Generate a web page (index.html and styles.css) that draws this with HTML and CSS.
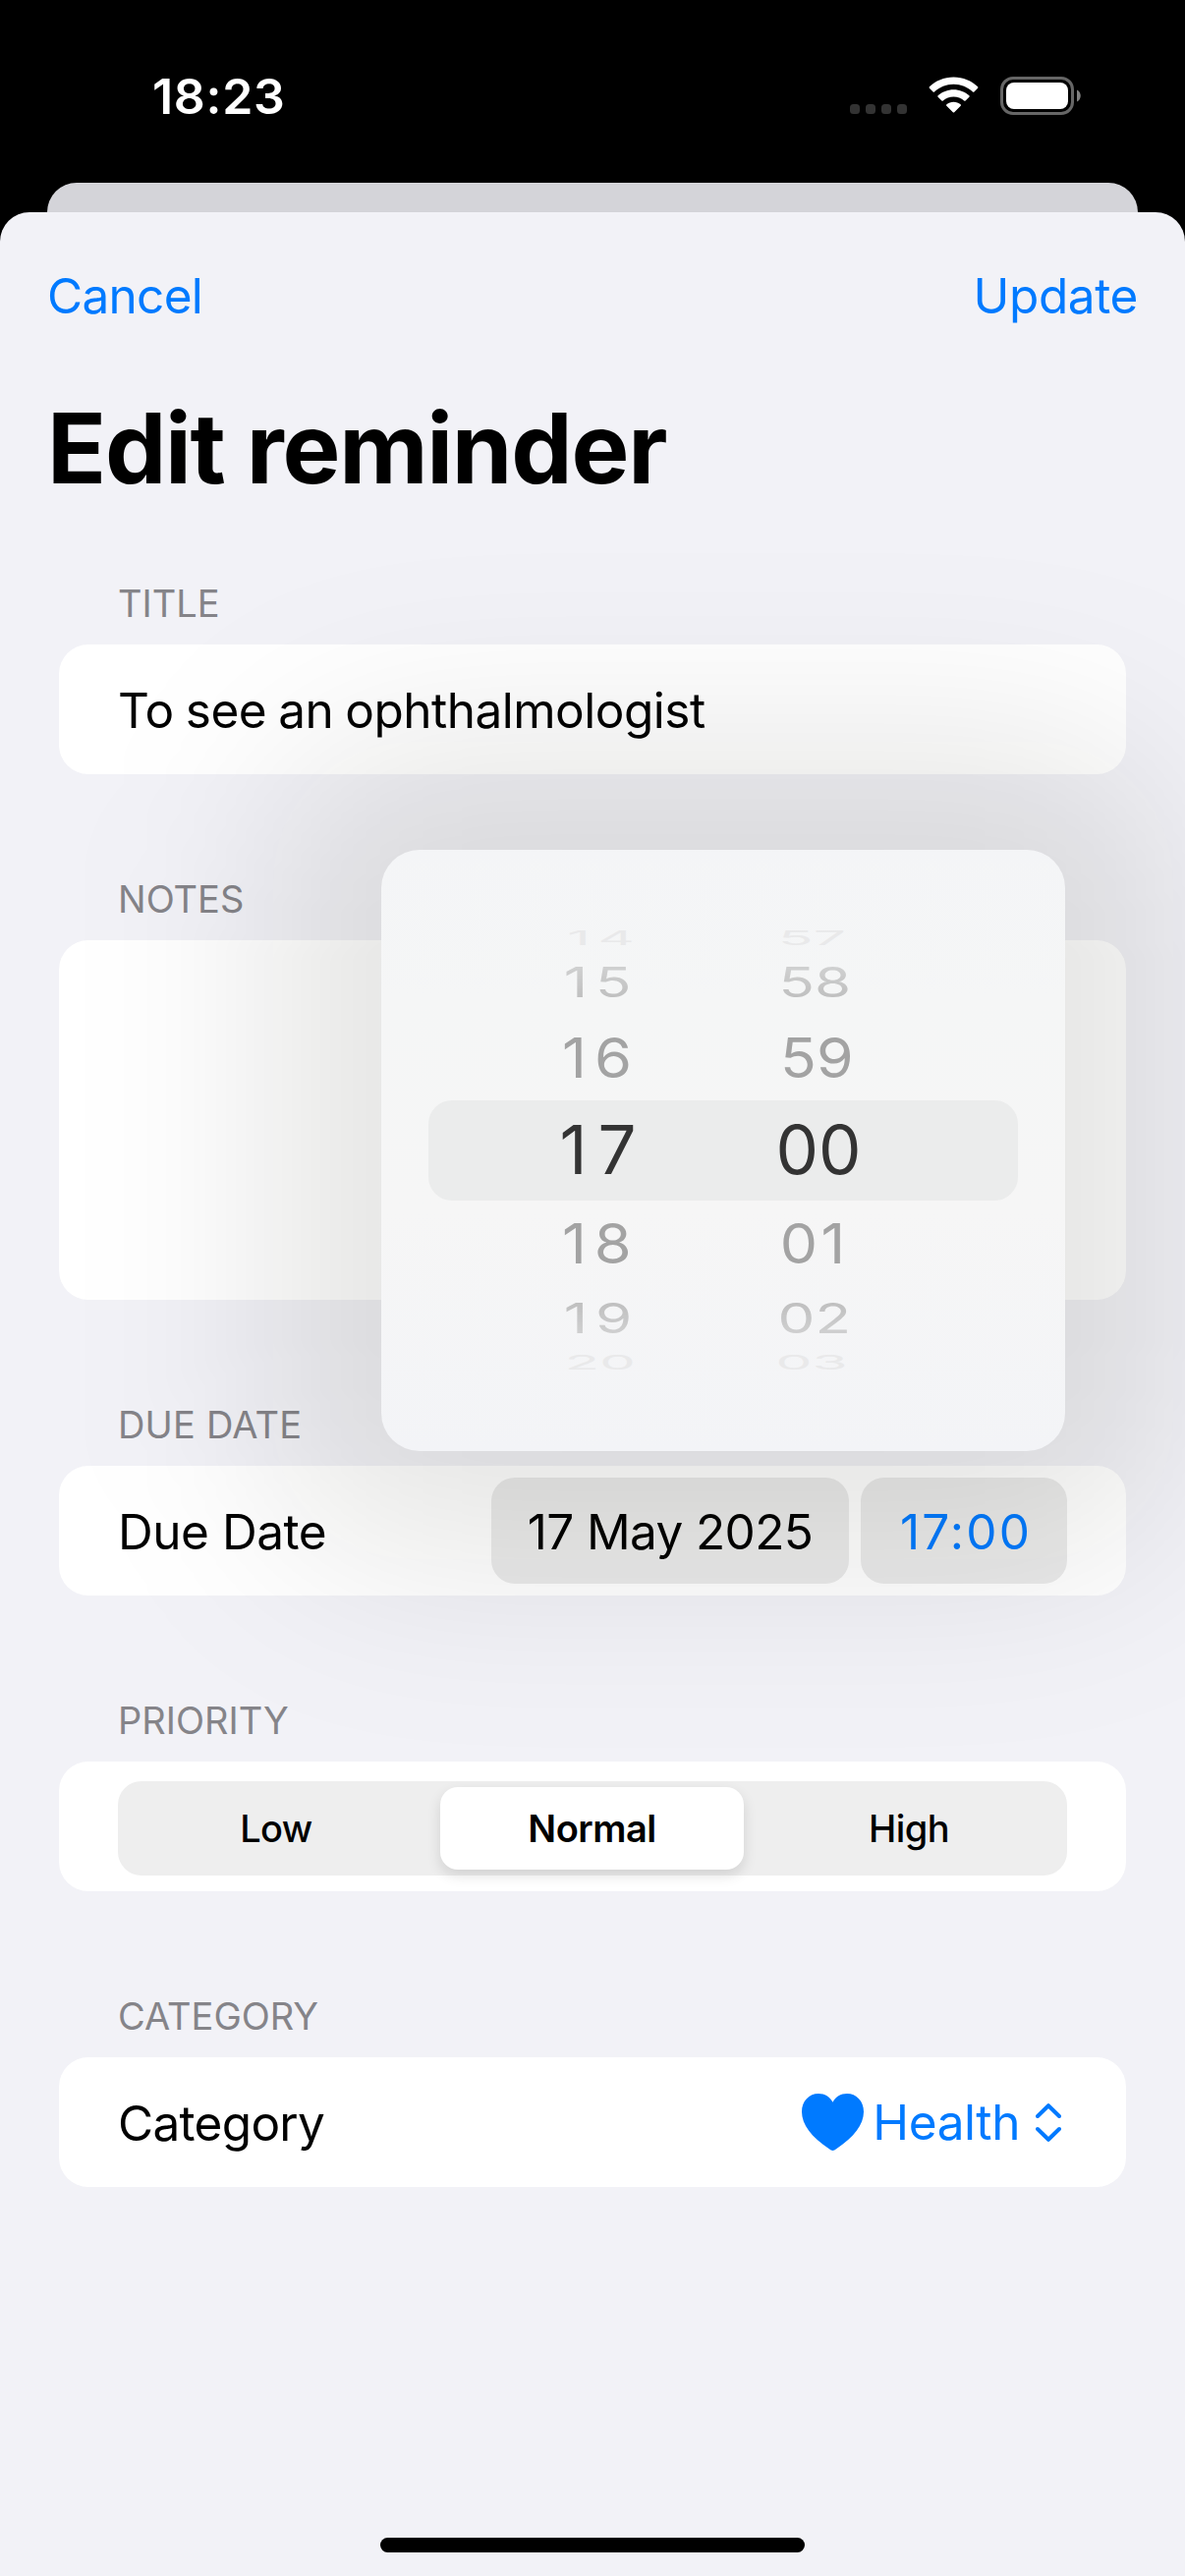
FILE: index.html
```html
<!DOCTYPE html>
<html lang="en">
<head>
<meta charset="utf-8">
<title>Edit reminder</title>
<link rel="stylesheet" href="styles.css">
</head>
<body>
<div class="screen">
  <header class="status">
    <span class="clock">18:23</span>
    <div class="status-icons">
      <svg class="dots" width="58" height="10" viewBox="0 0 58 10"><g fill="#333"><rect width="10" height="10" rx="3.5"/><rect x="16" width="10" height="10" rx="3.5"/><rect x="32" width="10" height="10" rx="3.5"/><rect x="48" width="10" height="10" rx="3.5"/></g></svg>
      <svg class="wifi" width="51" height="38" viewBox="0 0 51 38" fill="#fff"><path d="M25.500 0.500C35.200 0.500 44 4.300 50.100 10.300Q50.800 11 50.100 11.800L46.400 15.400Q45.700 16 45 15.400C39.800 10.600 33 7.700 25.500 7.700S11.200 10.600 6 15.400Q5.300 16 4.600 15.400L0.900 11.800Q0.200 11 0.900 10.300C7 4.300 15.800 0.500 25.500 0.500Z"/><path d="M25.500 13.200C31.600 13.200 37.200 15.500 41.400 19.300Q42.100 20 41.400 20.700L37.600 24.400Q36.900 25 36.200 24.400C33.300 21.900 29.600 20.500 25.500 20.500S17.700 21.900 14.800 24.400Q14.100 25 13.400 24.400L9.600 20.700Q8.900 20 9.600 19.300C13.800 15.500 19.400 13.200 25.500 13.200Z"/><path d="M25.500 25.800C28.200 25.800 30.700 26.700 32.600 28.300Q33.400 29 32.700 29.700L26.200 36.200Q25.500 36.900 24.800 36.200L18.300 29.700Q17.600 29 18.400 28.300C20.300 26.700 22.800 25.800 25.500 25.800Z"/></svg>
      <svg class="battery" width="83" height="39" viewBox="0 0 83 39"><rect x="1.500" y="1.500" width="72" height="36" rx="11.500" fill="none" stroke="#666" stroke-width="3"/><rect x="6" y="6" width="63" height="27" rx="8" fill="#fff"/><path d="M78 13.500C83 15.500 83 23.500 78 25.500Z" fill="#808080"/></svg>
    </div>
  </header>
  <div class="sheet-behind"></div>
  <main class="sheet">
    <nav class="bar"><span class="cancel">Cancel</span><span class="update">Update</span></nav>
    <h1 class="heading">Edit reminder</h1>
    <div class="form">
      <section class="group">
        <h2 class="label">TITLE</h2>
        <div class="card"><span class="text text-title">To see an ophthalmologist</span></div>
      </section>
      <section class="group">
        <h2 class="label">NOTES</h2>
        <div class="card card-notes"></div>
      </section>
      <section class="group">
        <h2 class="label label-due">DUE DATE</h2>
        <div class="card">
          <span class="text text-due">Due Date</span>
          <div class="pills">
            <span class="pill pill-date"><span class="text">17 May 2025</span></span>
            <span class="pill pill-time"><span class="text">17:00</span></span>
          </div>
        </div>
      </section>
      <section class="group">
        <h2 class="label">PRIORITY</h2>
        <div class="card card-segments">
          <div class="segments">
            <span class="segment">Low</span>
            <span class="segment segment-on">Normal</span>
            <span class="segment">High</span>
          </div>
        </div>
      </section>
      <section class="group">
        <h2 class="label">CATEGORY</h2>
        <div class="card">
          <span class="text text-category">Category</span>
          <div class="menu">
            <svg class="heart" width="63" height="58" viewBox="0 0 63 58"><path d="M31.500 58C30.500 58 29 57 27.500 56C10 44.500 0 31.500 0 18.500C0 7.500 7.500 0 17 0C23.500 0 28.500 3.300 31.500 8.700C34.500 3.300 39.500 0 46 0C55.500 0 63 7.500 63 18.500C63 31.500 53 44.500 35.500 56C34 57 32.500 58 31.500 58Z" fill="#007aff"/></svg>
            <span class="health">Health</span>
            <svg class="updown" width="26" height="39" viewBox="0 0 26 39" fill="none" stroke="#007aff" stroke-width="4" stroke-linecap="round" stroke-linejoin="round"><path d="M2 13L13 2.200L24 13M2 26L13 36.800L24 26"/></svg>
          </div>
        </div>
      </section>
      <div class="popover-shadow"></div>
      <div class="popover">
        <div class="wheel">
          <div class="row row-far"><span class="teen">14</span><span>57</span></div>
          <div class="row row-mid above"><span class="teen">15</span><span>58</span></div>
          <div class="row row-near"><span class="teen">16</span><span>59</span></div>
          <div class="row row-on"><span class="teen">17</span><span>00</span></div>
          <div class="row row-near"><span class="teen">18</span><span class="one">01</span></div>
          <div class="row row-mid below"><span class="teen">19</span><span>02</span></div>
          <div class="row row-far"><span>20</span><span>03</span></div>
        </div>
      </div>
    </div>
    <div class="home-indicator"></div>
  </main>
</div>
</body>
</html>
```
FILE: styles.css
```css
* { box-sizing: border-box; }

body {
  margin: 0;
  background: #000;
  font-family: Inter, "Liberation Sans", sans-serif;
  font-size: 49.5px;
  line-height: 60px;
  color: #000;
}

.screen {
  width: 1206px;
  height: 2622px;
  overflow: hidden;
  display: flex;
  flex-direction: column;
}

.status {
  height: 186px;
  flex: none;
  display: flex;
  justify-content: space-between;
  padding: 68px 105px 0 155px;
  color: #fff;
}

.clock { font-size: 50px; font-weight: 600; letter-spacing: .7px; }

.status-icons { display: flex; align-items: flex-start; padding-top: 10px; }
.dots { margin: 28px 22px 0 0; }
.wifi { margin-right: 22px; }

.sheet-behind {
  flex: none;
  height: 30px;
  margin: 0 48px;
  background: #d4d4d9;
  border-radius: 30px 30px 0 0;
}

.sheet {
  flex: 1;
  display: flex;
  flex-direction: column;
  background: #f2f2f7;
  border-radius: 30px 30px 0 0;
  overflow: hidden;
}

.bar {
  display: flex;
  justify-content: space-between;
  padding: 55px 48px 0;
  height: 180px;
  color: #007aff;
}

.cancel { letter-spacing: -.7px; }
.update { letter-spacing: -.4px; }

.heading {
  margin: 0;
  height: 188px;
  padding-left: 48px;
  font-size: 99px;
  line-height: 120px;
  font-weight: 700;
  letter-spacing: -1.25px;
}

.form { position: relative; padding: 0 60px; }

.group { margin-bottom: 97px; }

.label {
  margin: 0;
  height: 72px;
  padding: 6px 60px 0;
  font-size: 38px;
  line-height: 48px;
  font-weight: 400;
  color: #858489;
}

.label-due { letter-spacing: .2px; }

.card {
  display: flex;
  align-items: center;
  justify-content: space-between;
  height: 132px;
  padding: 0 60px;
  background: #fff;
  border-radius: 30px;
}

.card-notes { height: 366px; }

.text { padding-top: 1px; }
.text-title { letter-spacing: -.5px; word-spacing: -1.4px; }
.text-due { letter-spacing: -.45px; }
.text-category { letter-spacing: -.7px; }

.pills { display: flex; gap: 12px; }

.pill {
  height: 108px;
  display: flex;
  align-items: center;
  justify-content: center;
  border-radius: 24px;
  background: #ebebeb;
}

.pill-date { width: 364px; letter-spacing: -.6px; }

.pill-time {
  width: 210px;
  padding-left: 4px;
  color: #007aff;
  letter-spacing: 2.2px;
}

.card-segments { padding-top: 4px; }

.segments {
  flex: 1;
  display: flex;
  align-items: center;
  height: 96px;
  border-radius: 24px;
  background: #eee;
  font-size: 38px;
  font-weight: 500;
  letter-spacing: -.6px;
}

.segment {
  flex: 1;
  height: 84px;
  display: flex;
  align-items: center;
  justify-content: center;
}

.segment-on {
  flex: 0 0 309px;
  margin: 0 7px 0 6px;
  background: #fff;
  border-radius: 18px;
  font-weight: 600;
  letter-spacing: -.5px;
  box-shadow: 0 6px 14px rgba(0, 0, 0, .12);
}

.menu { display: flex; align-items: center; color: #007aff; padding-right: 6px; }
.heart { margin-right: 9px; }
.health { letter-spacing: -.4px; }
.updown { margin-left: 16px; }

.popover-shadow {
  position: absolute;
  left: 278px;
  top: 171px;
  width: 916px;
  height: 832px;
  border-radius: 140px;
  background: rgba(5, 5, 0, .104);
  filter: blur(100px);
}

.popover {
  position: absolute;
  left: 388px;
  top: 281px;
  width: 696px;
  height: 612px;
  border-radius: 39px;
  background: linear-gradient(#f4f5f7, #f5f6f6 25%, #f6f6f6 60%, #f3f4f7);
  padding: 78px 48px;
}

.wheel { display: flex; flex-direction: column; }

.row {
  display: grid;
  grid-template-columns: 340px 114px;
  align-items: center;
  justify-items: center;
  font-size: 69px;
  line-height: 0;
}

/* Each row is foreshortened and drifts towards the middle of the drum. */
.row-on { height: 102px; background: #ebecec; border-radius: 24px; color: #333; }
.row-near { height: 87px; color: #a3a3a3; }
.row-mid { height: 66px; color: #b6b6b6; }
.row-far { height: 24px; color: #e9e9ea; }
.teen { letter-spacing: 9px; }
.one { letter-spacing: 4px; }
.row-on span { transform: translate(0, -1px); }
.row-on .teen { letter-spacing: 11px; transform: translate(8px, -1px); }
.row-near span { transform: translate(-2px, -1px) scale(.88, .82); }
.row-near .teen { transform: translate(5px, -1px) scale(.89, .82); }
.row-near .one { transform: translate(-4px, -1px) scale(.88, .82); }
.row-mid span { transform: translateX(-4px) scale(.87, .61); }
.row-mid .teen { transform: translateX(6px) scale(.87, .61); }
.row-far span:first-child { transform: translateX(5px) scale(.84, .29); }
.row-far .teen:first-child { transform: translateX(9px) scale(.84, .29); }
.row-far span + span { transform: translateX(-7px) scale(.85, .29); }
.above { mask-image: linear-gradient(rgba(0, 0, 0, .45), #000); }
.below { mask-image: linear-gradient(#000, rgba(0, 0, 0, .45)); }

.home-indicator {
  flex: none;
  width: 432px;
  height: 15px;
  border-radius: 8px;
  background: #000;
  margin: auto auto 24px;
}
```
